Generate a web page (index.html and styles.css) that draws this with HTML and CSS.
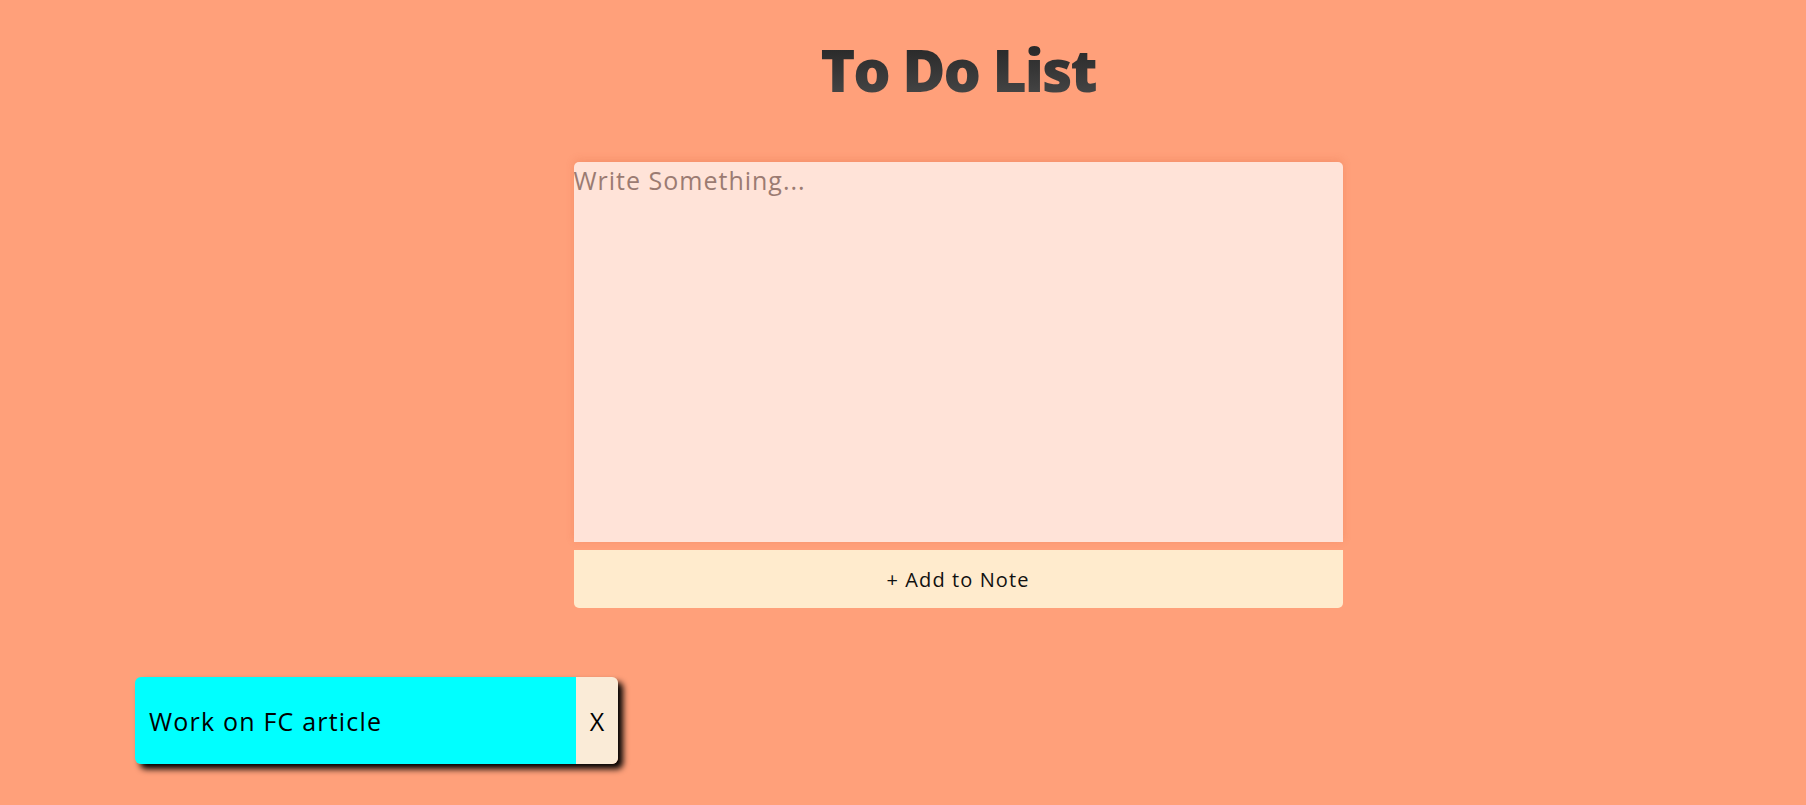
FILE: index.html
```html
<!DOCTYPE html>
<html>
<head>
<meta charset="utf-8">
<link rel="stylesheet" href="styles.css">
</head>
<body>
<main class="page">
  <h1 class="title">To Do List</h1>
  <form class="form">
    <textarea class="input" placeholder="Write Something..."></textarea>
    <button type="button" class="add">+ Add to Note</button>
  </form>
</main>
<section class="notes">
  <div class="note">
    <span class="note-text">Work on FC article</span>
    <button type="button" class="del">X</button>
  </div>
</section>
</body>
</html>
```
FILE: styles.css
```css
* { box-sizing: border-box; }
html, body { margin: 0; padding: 0; }
body {
  background: #ffa07a;
  font-family: "Open Sans", "DejaVu Sans", sans-serif;
  width: 1806px;
  height: 805px;
  overflow: hidden;
}
.page {
  padding-left: 110px;
  display: flex;
  flex-direction: column;
  align-items: center;
}
.title {
  margin: 34px 0 0 0;
  font-size: 59px;
  font-weight: 800;
  line-height: 70px;
  letter-spacing: -2px;
  background: linear-gradient(180deg, #222 0%, #4a4a4a 100%);
  -webkit-background-clip: text;
  background-clip: text;
  color: transparent;
}
.form {
  margin-top: 58px;
  width: 769px;
  display: flex;
  flex-direction: column;
  gap: 8px;
}
.input {
  display: block;
  width: 100%;
  height: 380px;
  border: none;
  outline: none;
  resize: none;
  padding: 0;
  border-radius: 5px 5px 0 0;
  background: #ffe3d8;
  box-shadow: 0 -2px 8px rgba(200, 80, 40, 0.18);
  font-family: inherit;
  font-size: 25px;
  line-height: 36px;
  letter-spacing: 1px;
  color: #222;
}
.input::placeholder { color: #9b7b72; }
.add {
  height: 58px;
  border: none;
  border-radius: 0 0 5px 5px;
  background: #ffebcd;
  font-family: inherit;
  font-size: 20px;
  letter-spacing: 1.1px;
  color: #111;
  padding: 0;
}
.notes {
  margin-top: 69px;
  padding-left: 135px;
  display: flex;
}
.note {
  display: flex;
  height: 87px;
  border-radius: 6px;
  box-shadow: 5px 5px 6px #000;
  overflow: hidden;
}
.note-text {
  width: 441px;
  background: #00ffff;
  display: flex;
  align-items: center;
  padding-left: 14px;
  font-size: 25px;
  letter-spacing: 1.2px;
  color: #000;
}
.del {
  width: 42px;
  border: none;
  background: #faebd7;
  font-family: inherit;
  font-size: 25px;
  color: #000;
  padding: 0;
}
```
